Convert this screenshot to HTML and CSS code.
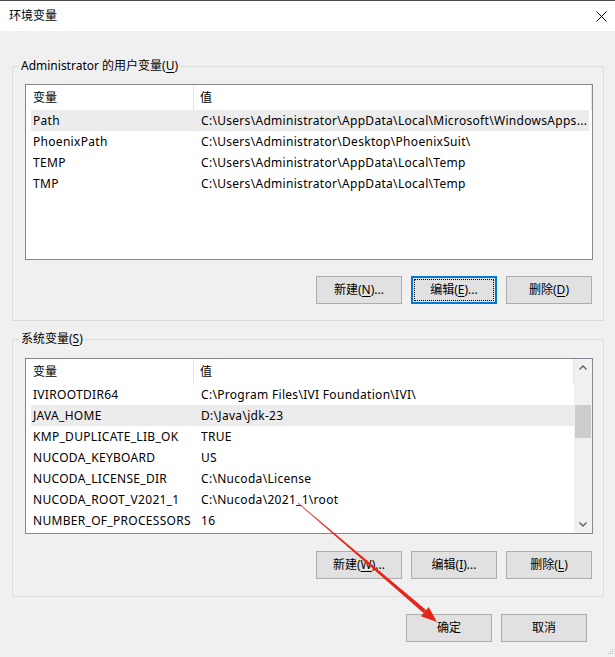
FILE: index.html
```html
<!DOCTYPE html>
<html lang="zh-CN">
<head>
  <meta charset="UTF-8">
  <title>环境变量</title>
  <link rel="stylesheet" href="styles.css">
</head>
<body>
  <div class="window">
    <div class="titlebar">
      <span class="title">环境变量</span>
      <svg class="close" width="11" height="11" viewBox="0 0 11 11">
        <path d="M0.5 0.5 L10.5 10.5 M10.5 0.5 L0.5 10.5" stroke="#000" stroke-width="1" fill="none"/>
      </svg>
    </div>

    <div class="content">
      <!-- 用户变量 -->
      <fieldset class="group group-user">
        <legend>Administrator 的用户变量(<u>U</u>)</legend>
        <div class="listview">
          <div class="lv-main">
            <div class="lv-header">
              <div class="col-name">变量</div>
              <div class="col-value">值</div>
            </div>
            <div class="lv-row selected"><div class="cell-name">Path</div><div class="cell-value">C:\Users\Administrator\AppData\Local\Microsoft\WindowsApps...</div></div>
            <div class="lv-row"><div class="cell-name">PhoenixPath</div><div class="cell-value">C:\Users\Administrator\Desktop\PhoenixSuit\</div></div>
            <div class="lv-row"><div class="cell-name">TEMP</div><div class="cell-value">C:\Users\Administrator\AppData\Local\Temp</div></div>
            <div class="lv-row"><div class="cell-name">TMP</div><div class="cell-value">C:\Users\Administrator\AppData\Local\Temp</div></div>
          </div>
        </div>
        <div class="btn-row">
          <button class="btn">新建(<u>N</u>)...</button>
          <button class="btn focused">编辑(<u>E</u>)...</button>
          <button class="btn">删除(<u>D</u>)</button>
        </div>
      </fieldset>

      <!-- 系统变量 -->
      <fieldset class="group group-system">
        <legend>系统变量(<u>S</u>)</legend>
        <div class="listview">
          <div class="lv-main lv-scroll">
            <div class="lv-header">
              <div class="col-name">变量</div>
              <div class="col-value">值</div>
            </div>
            <div class="lv-row"><div class="cell-name">IVIROOTDIR64</div><div class="cell-value">C:\Program Files\IVI Foundation\IVI\</div></div>
            <div class="lv-row selected"><div class="cell-name">JAVA_HOME</div><div class="cell-value">D:\Java\jdk-23</div></div>
            <div class="lv-row"><div class="cell-name">KMP_DUPLICATE_LIB_OK</div><div class="cell-value">TRUE</div></div>
            <div class="lv-row"><div class="cell-name">NUCODA_KEYBOARD</div><div class="cell-value">US</div></div>
            <div class="lv-row"><div class="cell-name">NUCODA_LICENSE_DIR</div><div class="cell-value">C:\Nucoda\License</div></div>
            <div class="lv-row"><div class="cell-name">NUCODA_ROOT_V2021_1</div><div class="cell-value">C:\Nucoda\2021_1\root</div></div>
            <div class="lv-row"><div class="cell-name">NUMBER_OF_PROCESSORS</div><div class="cell-value">16</div></div>
          </div>
          <div class="scrollbar">
            <div class="sb-arrow">
              <svg width="8" height="5" viewBox="0 0 8 5"><path d="M0.5 4.5 L4 1 L7.5 4.5" stroke="#606060" stroke-width="1.4" fill="none"/></svg>
            </div>
            <div class="sb-track"><div class="sb-thumb"></div></div>
            <div class="sb-arrow">
              <svg width="8" height="5" viewBox="0 0 8 5"><path d="M0.5 0.5 L4 4 L7.5 0.5" stroke="#606060" stroke-width="1.4" fill="none"/></svg>
            </div>
          </div>
        </div>
        <div class="btn-row">
          <button class="btn">新建(<u>W</u>)...</button>
          <button class="btn">编辑(<u>I</u>)...</button>
          <button class="btn">删除(<u>L</u>)</button>
        </div>
      </fieldset>

      <div class="dialog-buttons">
        <button class="btn">确定</button>
        <button class="btn">取消</button>
      </div>
    </div>

    <svg class="grip" width="6" height="6" viewBox="0 0 6 6">
      <rect x="4" y="0" width="1" height="1" fill="#bbb"/>
      <rect x="2" y="2" width="1" height="1" fill="#bbb"/>
      <rect x="4" y="2" width="1" height="1" fill="#bbb"/>
      <rect x="0" y="4" width="1" height="1" fill="#bbb"/>
      <rect x="2" y="4" width="1" height="1" fill="#bbb"/>
      <rect x="4" y="4" width="1" height="1" fill="#bbb"/>
    </svg>

    <!-- 红色标注箭头 -->
    <svg class="annotation" width="615" height="657" viewBox="0 0 615 657">
      <polygon points="297.8,503.2 298.2,502.8 426.1,610.1 423.5,613.1" fill="#e5261b"/>
      <polygon points="437,622 420.9,616.2 428.7,607" fill="#e5261b"/>
    </svg>
  </div>
</body>
</html>
```

FILE: styles.css
```css
* {
  box-sizing: border-box;
}
body {
  margin: 0;
  background: #f0f0f0;
  font-family: "Noto Sans", "Noto Sans CJK SC", sans-serif;
  font-size: 12px;
  color: #000;
}
.window {
  position: relative;
  width: 615px;
  height: 657px;
  border-top: 1px solid #4a4a4a;
  background: #f0f0f0;
  overflow: hidden;
}
.titlebar {
  height: 30px;
  background: #fff;
  display: flex;
  align-items: center;
  justify-content: space-between;
  padding: 0 9px 0 9px;
}
.title {
  font-size: 12px;
  line-height: 16px;
}
.close {
  display: block;
  margin-right: -1px;
}
.content {
  padding: 27px 11px 0 12px;
}

/* Grupos */
.group {
  margin: 0;
  border: 1px solid #dcdcdc;
  padding: 10px 10px 16px 12px;
  min-width: 0;
}
.group legend {
  padding: 0 2px;
  margin-left: -6px;
  line-height: 16px;
}
.group u {
  text-decoration-thickness: 1px;
  text-underline-offset: 2px;
}
.group-system {
  margin-top: 10px;
  padding-top: 11px;
  padding-bottom: 17px;
}

/* Lista */
.listview {
  display: flex;
  border: 1px solid #828790;
  background: #fff;
  height: 176px;
}
.lv-main {
  flex: 1;
  min-width: 0;
}
.lv-header {
  display: flex;
  height: 25px;
  align-items: center;
  line-height: 16px;
}
.lv-header .col-name {
  width: 168px;
  padding-left: 7px;
  height: 25px;
  display: flex;
  align-items: center;
  border-right: 1px solid #e5e5e5;
}
.lv-header .col-value {
  flex: 1;
  padding-left: 6px;
  height: 25px;
  display: flex;
  align-items: center;
  border-right: 1px solid #e5e5e5;
}
.lv-row {
  display: flex;
  height: 21px;
  align-items: center;
  margin: 0 3px 0 5px;
  white-space: nowrap;
  letter-spacing: 0.3px;
}
.lv-scroll .lv-row {
  margin-right: 0;
}
.lv-row.selected {
  background: #ececec;
}
.cell-name {
  width: 170px;
  padding-left: 2px;
  flex-shrink: 0;
}
.cell-value {
  overflow: hidden;
}

/* Barra de rolagem */
.scrollbar {
  width: 18px;
  background: #f0f0f0;
  display: flex;
  flex-direction: column;
}
.sb-arrow {
  height: 17px;
  display: flex;
  align-items: center;
  justify-content: center;
}
.sb-arrow svg {
  display: block;
}
.sb-track {
  flex: 1;
  padding: 29px 1px 0 1px;
}
.sb-thumb {
  height: 33px;
  background: #cdcdcd;
}

/* Botões */
.btn-row {
  display: flex;
  justify-content: flex-end;
  gap: 9px;
  margin-top: 16px;
  padding-right: 1px;
}
.group-system .btn-row {
  margin-top: 17px;
}
.btn {
  width: 86px;
  height: 28px;
  background: #e1e1e1;
  border: 1px solid #adadad;
  font-family: inherit;
  font-size: 12px;
  color: #000;
  padding: 0;
  line-height: 16px;
}
.btn u {
  text-decoration-thickness: 1px;
  text-underline-offset: 2px;
}
.btn.focused {
  border: 2px solid #0078d7;
  outline: 1px dotted #000;
  outline-offset: -4px;
}
.dialog-buttons {
  display: flex;
  justify-content: flex-end;
  gap: 9px;
  margin-top: 17px;
  padding-right: 17px;
}

.grip {
  position: absolute;
  right: 1px;
  bottom: 2px;
}
.annotation {
  position: absolute;
  left: 0;
  top: -1px;
  pointer-events: none;
}
```
